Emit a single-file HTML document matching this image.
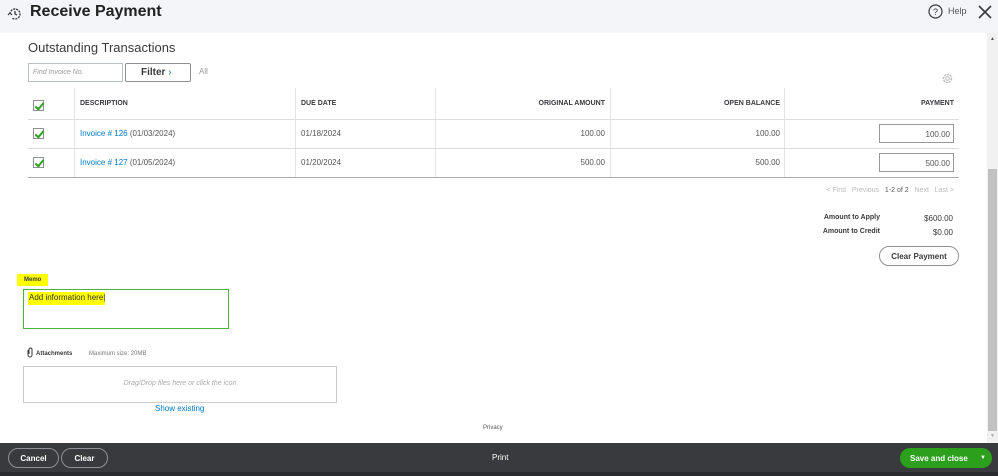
<!DOCTYPE html>
<html><head><style>
*{margin:0;padding:0;box-sizing:border-box}
body{width:998px;height:476px;overflow:hidden;background:#fff;font-family:"Liberation Sans",Arial,sans-serif;position:relative;color:#393a3d}
.a{position:absolute}
.hdr{left:0;top:0;width:998px;height:33px;background:#f4f5f8}
.th{font-size:7px;font-weight:bold;color:#393a3d;top:100px}
.td{font-size:8px;color:#555}
.cb{width:11px;height:11px;border:1px solid #8d9096;background:#fff}
.cb:after{content:"";position:absolute;left:3px;top:0px;width:3px;height:7px;border:solid #2ca01c;border-width:0 2px 2px 0;transform:rotate(40deg)}
.vl{width:1px;background:#e3e4e6;top:88px;height:89px}
.hl{height:1px;background:#dcdcdc;left:28px;width:931px}
.link{color:#0077c5}
.r{text-align:right}
</style></head><body>
<div class="a hdr"></div>
<svg class="a" style="left:7px;top:6px" width="16" height="16" viewBox="0 0 16 16"><path d="M3 8a5 5 0 1 1 2 4" fill="none" stroke="#393a3d" stroke-width="1.4" stroke-dasharray="2 1"/><path d="M8 5v3l2 1" fill="none" stroke="#393a3d" stroke-width="1.3"/><path d="M1 9l2 -2 2 2" fill="none" stroke="#393a3d" stroke-width="1.2"/></svg>
<div class="a" style="left:30px;top:3px;font-size:16px;font-weight:bold;color:#222">Receive Payment</div>
<svg class="a" style="left:928px;top:4px" width="15" height="15"><circle cx="7.5" cy="7.5" r="6.5" fill="none" stroke="#393a3d" stroke-width="1.2"/><text x="7.5" y="11" font-size="9" text-anchor="middle" fill="#393a3d" font-family="Liberation Sans">?</text></svg>
<div class="a" style="left:948px;top:6px;font-size:9px;color:#555">Help</div>
<svg class="a" style="left:977px;top:4px" width="16" height="16"><path d="M2 2L14 14M14 2L2 14" stroke="#393a3d" stroke-width="1.6"/></svg>
<div class="a" style="left:987px;top:33px;width:11px;height:410px;background:#f1f1f1"></div>
<div class="a" style="left:988px;top:169px;width:9px;height:262px;background:#c1c1c1"></div>
<div class="a" style="left:990px;top:36px;font-size:5px;color:#555">▲</div>
<div class="a" style="left:990px;top:433px;font-size:5px;color:#aaa">▼</div>

<div class="a" style="left:28px;top:40px;font-size:13px;color:#393a3d">Outstanding Transactions</div>
<div class="a" style="left:28px;top:63px;width:95px;height:19px;border:1px solid #babec5;font-size:7px;font-style:italic;color:#999;padding:5px 4px">Find Invoice No.</div>
<div class="a" style="left:125px;top:63px;width:66px;height:19px;border:1px solid #8d9096;border-radius:2px;font-size:10px;font-weight:bold;color:#393a3d;padding:3px 0 0 15px">Filter <span style="color:#0077c5;font-weight:normal">›</span></div>
<div class="a" style="left:199px;top:67px;font-size:8px;color:#999">All</div>
<svg class="a" style="left:941px;top:72px" width="13" height="13"><circle cx="6.5" cy="6.5" r="4" fill="none" stroke="#bbb" stroke-width="1.5" stroke-dasharray="2 1"/><circle cx="6.5" cy="6.5" r="1.8" fill="none" stroke="#bbb"/></svg>

<div class="a vl" style="left:74px"></div><div class="a vl" style="left:295px"></div><div class="a vl" style="left:435px"></div><div class="a vl" style="left:610px"></div><div class="a vl" style="left:784px"></div>
<div class="a hl" style="top:119px"></div><div class="a hl" style="top:148px"></div><div class="a hl" style="top:177px;background:#aaa"></div>
<div class="a cb" style="left:33px;top:100px"></div><div class="a cb" style="left:33px;top:128px"></div><div class="a cb" style="left:33px;top:157px"></div>
<div class="a th" style="left:80px">DESCRIPTION</div>
<div class="a th" style="left:301px">DUE DATE</div>
<div class="a th r" style="right:393px">ORIGINAL AMOUNT</div>
<div class="a th r" style="right:218px">OPEN BALANCE</div>
<div class="a th r" style="right:44px">PAYMENT</div>
<div class="a td" style="left:80px;top:129px"><span class="link">Invoice # 126</span> (01/03/2024)</div>
<div class="a td" style="left:301px;top:129px">01/18/2024</div>
<div class="a td" style="right:393px;top:129px">100.00</div>
<div class="a td" style="right:218px;top:129px">100.00</div>
<div class="a td" style="left:879px;top:124px;width:75px;height:19px;border:1px solid #999;text-align:right;padding:5px 3px">100.00</div>
<div class="a td" style="left:80px;top:158px"><span class="link">Invoice # 127</span> (01/05/2024)</div>
<div class="a td" style="left:301px;top:158px">01/20/2024</div>
<div class="a td" style="right:393px;top:158px">500.00</div>
<div class="a td" style="right:218px;top:158px">500.00</div>
<div class="a td" style="left:879px;top:153px;width:75px;height:19px;border:1px solid #999;text-align:right;padding:5px 3px">500.00</div>

<div class="a" style="right:44px;top:187px;font-size:7px;color:#bbb">&lt; First &nbsp; Previous &nbsp; <span style="color:#555">1-2 of 2</span> &nbsp; Next &nbsp; Last &gt;</div>
<div class="a" style="right:118px;top:214px;font-size:7px;font-weight:bold">Amount to Apply</div>
<div class="a" style="right:45px;top:214px;font-size:8px">$600.00</div>
<div class="a" style="right:118px;top:228px;font-size:7px;font-weight:bold">Amount to Credit</div>
<div class="a" style="right:45px;top:228px;font-size:8px">$0.00</div>
<div class="a" style="left:879px;top:246px;width:80px;height:20px;border:1px solid #8d9096;border-radius:10px;font-size:8px;font-weight:bold;text-align:center;padding-top:5px">Clear Payment</div>

<div class="a" style="left:17px;top:274px;width:31px;height:12px;background:#ffff00"></div>
<div class="a" style="left:24px;top:277px;font-size:6px;font-weight:bold">Memo</div>
<div class="a" style="left:23px;top:289px;width:206px;height:40px;border:1px solid #52b043"></div>
<div class="a" style="left:28px;top:292px;width:77px;height:13px;background:#ffff00"></div>
<div class="a" style="left:29px;top:293px;font-size:8px;color:#333">Add information here|</div>
<svg class="a" style="left:26px;top:347px" width="8" height="11"><path d="M2 3v5a2 2 0 0 0 4 0V2.5a1.5 1.5 0 0 0-3 0V7" fill="none" stroke="#393a3d"/></svg>
<div class="a" style="left:36px;top:351px;font-size:6px;font-weight:bold">Attachments</div>
<div class="a" style="left:89px;top:351px;font-size:6px;color:#777">Maximum size: 20MB</div>
<div class="a" style="left:23px;top:366px;width:314px;height:37px;border:1px solid #ccc;font-size:7px;font-style:italic;color:#aaa;text-align:center;padding-top:13px">Drag/Drop files here or click the icon</div>
<div class="a" style="left:155px;top:404px;font-size:8px;color:#0077c5">Show existing</div>
<div class="a" style="left:483px;top:425px;font-size:6px;color:#555">Privacy</div>

<div class="a" style="left:0;top:443px;width:998px;height:29px;background:#393a3d"></div>
<div class="a" style="left:0;top:472px;width:998px;height:4px;background:#2a2b2e"></div>
<div class="a" style="left:8px;top:448px;width:51px;height:20px;border:1px solid #8d9096;border-radius:10px;color:#fff;font-size:8px;font-weight:bold;text-align:center;padding-top:5px">Cancel</div>
<div class="a" style="left:61px;top:448px;width:47px;height:20px;border:1px solid #8d9096;border-radius:10px;color:#fff;font-size:8px;font-weight:bold;text-align:center;padding-top:5px">Clear</div>
<div class="a" style="left:492px;top:453px;font-size:8px;color:#fff">Print</div>
<div class="a" style="left:900px;top:448px;width:92px;height:20px;background:#2ca01c;border-radius:10px;color:#fff;font-size:8px;font-weight:bold;padding:6px 0 0 10px">Save and close</div>
<div class="a" style="left:980px;top:455px;font-size:6px;color:#fff">▼</div>
</body></html>
